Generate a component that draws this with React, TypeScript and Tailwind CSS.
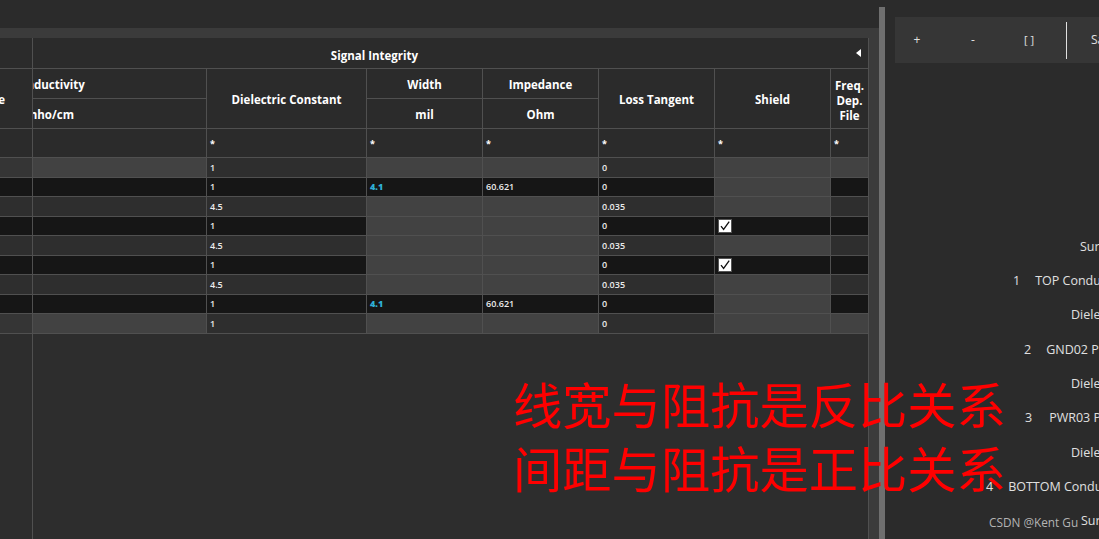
import React from "react";

const B = "bg-[#161616]";
const G = "bg-[#424242]";
const M = "bg-[#2e2e2e]";
const S = "bg-[#353535]";

type Row = {
  bg: string[];
  diel: string;
  width?: string;
  imp?: string;
  loss: string;
  check?: boolean;
};

const surface: Row = { bg: [S, G, M, G, G, M, G, G], diel: "1", loss: "0" };
const cond: Row = { bg: [B, B, B, B, B, B, G, B], diel: "1", width: "4.1", imp: "60.621", loss: "0" };
const diel: Row = { bg: [M, M, M, G, G, M, G, M], diel: "4.5", loss: "0.035" };
const plane: Row = { bg: [B, B, B, G, G, B, B, B], diel: "1", loss: "0", check: true };

const rows: Row[] = [surface, cond, diel, plane, diel, plane, diel, cond, surface];

const hdr = "bg-[#2b2b2b] text-white font-bold text-[11.5px] flex items-center justify-center pt-[3px]";
const dataTxt = "text-[9px] flex items-center pl-[3px] overflow-hidden whitespace-nowrap";

function Check() {
  return (
    <div className="w-[14px] h-[14px] bg-white border border-[#555] flex items-center justify-center">
      <svg width="12" height="12" viewBox="0 0 12 12">
        <path d="M2 6.2 L4.6 9.4 L10.2 1.6" fill="none" stroke="#111" strokeWidth="1.3" />
      </svg>
    </div>
  );
}

const stack: { pl: number; num?: string; gap?: number; name: string }[] = [
  { pl: 195, name: "Surface" },
  { pl: 128, num: "1", gap: 15, name: "TOP Conductor" },
  { pl: 186, name: "Dielectric" },
  { pl: 139, num: "2", gap: 15, name: "GND02 Plane" },
  { pl: 186, name: "Dielectric" },
  { pl: 140, num: "3", gap: 17, name: "PWR03 Plane" },
  { pl: 186, name: "Dielectric" },
  { pl: 101, num: "4", gap: 15, name: "BOTTOM Conductor" },
  { pl: 196, name: "Surface" },
];

export default function App() {
  return (
    <div className="relative w-[1099px] h-[539px] overflow-hidden bg-[#2b2b2b] flex font-['Open_Sans',sans-serif]">
      {/* Left pane */}
      <div className="w-[879px] shrink-0 h-full flex flex-col">
        <div className="h-[28px] bg-[#2b2b2b]" />
        <div className="flex-1 bg-[#3b3b3b] pt-[10px] pr-[10px] flex min-h-0">
          <div className="w-[869px] h-full bg-[#2d2d2d] border-r border-[#505050] flex flex-col">
            <div className="grid grid-cols-[32px_173px_159px_115px_115px_115px_115px_37px] grid-rows-[30px_29px_29px_28px_repeat(9,18.56px)] gap-px bg-[#505050] border-b border-[#505050]">
              {/* header row 1 */}
              <div className="bg-[#2b2b2b]" />
              <div className={`${hdr} col-span-7 relative pr-[152px] pt-[6px]`}>
                Signal Integrity
                <svg className="absolute right-[7px] top-[11px]" width="5" height="8" viewBox="0 0 5 8">
                  <path d="M5 0 L0 4 L5 8 Z" fill="#fff" />
                </svg>
              </div>
              {/* header rows 2-3 */}
              <div className={`${hdr} row-span-2 justify-end pr-[27px] overflow-hidden whitespace-nowrap`}>Type</div>
              <div className={`${hdr} justify-start overflow-hidden whitespace-nowrap`}>
                <span className="ml-[-21px]">Conductivity</span>
              </div>
              <div className={`${hdr} row-span-2`}>Dielectric Constant</div>
              <div className={hdr}>Width</div>
              <div className={hdr}>Impedance</div>
              <div className={`${hdr} row-span-2`}>Loss Tangent</div>
              <div className={`${hdr} row-span-2`}>Shield</div>
              <div className={`${hdr} row-span-2 text-center leading-[15px]`}>
                Freq.
                <br />
                Dep.
                <br />
                File
              </div>
              <div className={`${hdr} justify-start overflow-hidden whitespace-nowrap`}>
                <span className="ml-[-7px]">mho/cm</span>
              </div>
              <div className={hdr}>mil</div>
              <div className={hdr}>Ohm</div>
              {/* asterisk row */}
              <div className="bg-[#2b2b2b]" />
              <div className="bg-[#2b2b2b]" />
              {[0, 1, 2, 3, 4, 5].map((i) => (
                <div key={i} className="bg-[#2b2b2b] text-white text-[9px] font-bold flex items-center pl-[3px] pt-[2px]">
                  *
                </div>
              ))}
              {/* data rows */}
              {rows.map((r, i) => (
                <React.Fragment key={i}>
                  <div className={r.bg[0]} />
                  <div className={r.bg[1]} />
                  <div className={`${r.bg[2]} ${dataTxt} font-semibold text-[#ececec]`}>{r.diel}</div>
                  <div className={`${r.bg[3]} ${dataTxt} font-extrabold text-[#2fb0d6]`}>{r.width ?? ""}</div>
                  <div className={`${r.bg[4]} ${dataTxt} font-semibold text-[#ececec]`}>{r.imp ?? ""}</div>
                  <div className={`${r.bg[5]} ${dataTxt} font-semibold text-[#ececec]`}>{r.loss}</div>
                  <div className={`${r.bg[6]} flex items-center pl-[3px]`}>{r.check ? <Check /> : null}</div>
                  <div className={r.bg[7]} />
                </React.Fragment>
              ))}
            </div>
            <div className="flex-1 flex">
              <div className="w-[33px] border-r border-[#505050]" />
            </div>
          </div>
        </div>
      </div>

      {/* Splitter */}
      <div className="w-[6px] shrink-0 mt-[7px] bg-[#6f6f6f]" />

      {/* Right pane */}
      <div className="flex-1 min-w-0 overflow-hidden h-full flex flex-col bg-[#2b2b2b] text-[#e0e0e0]">
        <div className="ml-[10px] mt-[17px] h-[46px] shrink-0 bg-[#363636] flex items-center pl-[16px] text-[12px] whitespace-nowrap">
          <span className="w-[12px] shrink-0 text-center">+</span>
          <span className="w-[12px] shrink-0 text-center ml-[44px]">-</span>
          <span className="w-[12px] shrink-0 text-center ml-[44px] text-[11px]">[ ]</span>
          <div className="w-px shrink-0 h-[37px] bg-[#e0e0e0] ml-[31px]" />
          <span className="ml-[24px] shrink-0">Save</span>
        </div>
        <div className="mt-[167px] flex flex-col">
          {stack.map((s, i) => (
            <div
              key={i}
              className="h-[34.3px] shrink-0 flex items-center text-[12.5px] whitespace-nowrap"
              style={{ paddingLeft: s.pl }}
            >
              {s.num ? <span className="shrink-0" style={{ marginRight: s.gap }}>{s.num}</span> : null}
              <span className="shrink-0">{s.name}</span>
            </div>
          ))}
        </div>
      </div>

      {/* Annotation overlay */}
      <div className="absolute left-[513px] top-[371px] text-[49.3px] leading-[63.5px] text-[#ff0000] font-['Noto_Sans_CJK_SC',sans-serif] whitespace-nowrap">
        <div>线宽与阻抗是反比关系</div>
        <div>间距与阻抗是正比关系</div>
      </div>

      {/* Watermark */}
      <div className="absolute left-[989px] top-[514px] text-[11.8px] text-[#b4b4b4] font-['Open_Sans',sans-serif] whitespace-nowrap">
        CSDN @Kent Gu
      </div>
    </div>
  );
}
